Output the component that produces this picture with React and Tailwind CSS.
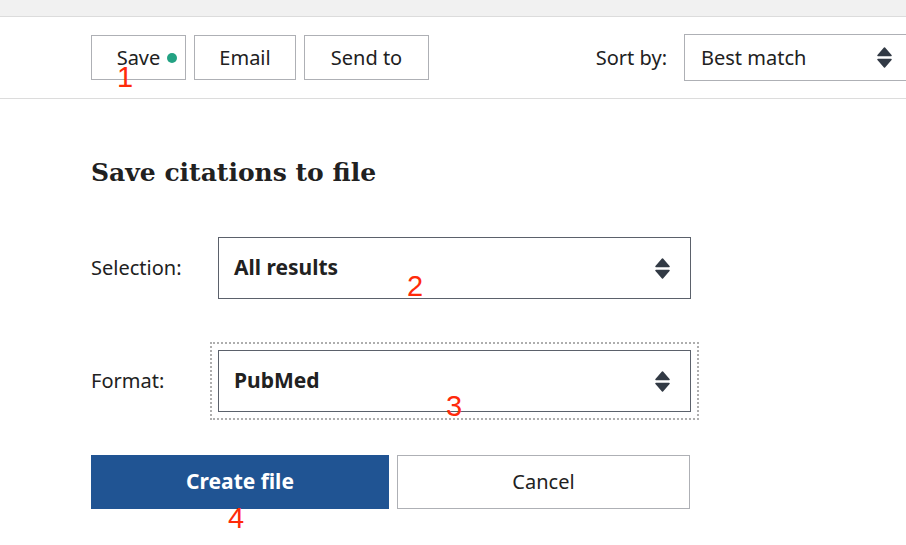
import { useState } from "react";

const sans = { fontFamily: '"Noto Sans", "Open Sans", sans-serif' };

function Arrows() {
  return (
    <svg width="15" height="21" viewBox="0 0 15 21" className="shrink-0">
      <path d="M7.5 1 L14 8.5 H1 Z" fill="#323a45" stroke="#323a45" strokeWidth="1.5" strokeLinejoin="round" />
      <path d="M1 12.5 H14 L7.5 20 Z" fill="#323a45" stroke="#323a45" strokeWidth="1.5" strokeLinejoin="round" />
    </svg>
  );
}

function Field({ label, value, focused }) {
  return (
    <div className="flex items-center">
      <span className="w-[127px] text-[20px] text-[#212121]">{label}</span>
      <div
        className={
          "w-[473px] h-[62px] border border-[#5b616b] bg-white flex items-center justify-between pl-[15px] pr-[20px] " +
          (focused ? "outline-[2px] outline-dotted outline-[#aeaeae] outline-offset-[6px]" : "")
        }
      >
        <span className="text-[21px] font-bold text-[#212121]">{value}</span>
        <Arrows />
      </div>
    </div>
  );
}

function Mark({ n, className }) {
  return (
    <span
      className={"absolute text-[29px] leading-none text-[#ff2a0a] " + className}
      style={{ fontFamily: '"Liberation Sans", Arial, sans-serif' }}
    >
      {n}
    </span>
  );
}

export default function App() {
  const [format] = useState("PubMed");

  return (
    <div className="relative w-[906px] h-[545px] overflow-hidden bg-white" style={sans}>
      <div className="h-[17px] bg-[#f1f1f1] border-b border-[#dcdcdc]" />

      <div className="h-[82px] border-b border-[#dcdcdc] flex items-center pl-[91px]">
        <div className="flex gap-[8px]">
          <button className="relative w-[95px] h-[45px] border border-[#aeb0b5] text-[20px] text-[#212121]">
            Save
            <span className="absolute left-[75px] top-[17px] w-[10px] h-[10px] rounded-full bg-[#23a283]" />
          </button>
          <button className="w-[102px] h-[45px] border border-[#aeb0b5] text-[20px] text-[#212121]">Email</button>
          <button className="w-[125px] h-[45px] border border-[#aeb0b5] text-[20px] text-[#212121]">Send to</button>
        </div>
        <span className="ml-auto mr-[17px] text-[20px] text-[#212121]">Sort by:</span>
        <div className="w-[235px] -mr-[13px] h-[47px] border border-[#aeb0b5] flex items-center justify-between pl-[16px] pr-[26px] shrink-0">
          <span className="text-[20px] text-[#212121]">Best match</span>
          <Arrows />
        </div>
      </div>

      <div className="pl-[91px] pt-[56px]">
        <h2
          className="text-[25px] leading-[36px] font-bold text-[#212121]"
          style={{ fontFamily: '"DejaVu Serif", "Liberation Serif", serif' }}
        >
          Save citations to file
        </h2>

        <div className="mt-[46px] flex flex-col gap-[51px]">
          <Field label="Selection:" value="All results" />
          <Field label="Format:" value={format} focused />
        </div>

        <div className="mt-[43px] flex gap-[8px]">
          <button className="w-[298px] h-[54px] bg-[#205493] text-white text-[21px] font-bold">Create file</button>
          <button className="w-[293px] h-[54px] border border-[#aeb0b5] bg-white text-[20px] text-[#212121]">Cancel</button>
        </div>
      </div>

      <Mark n="1" className="left-[117px] top-[63px]" />
      <Mark n="2" className="left-[407px] top-[272px]" />
      <Mark n="3" className="left-[446px] top-[392px]" />
      <Mark n="4" className="left-[228px] top-[504px]" />
    </div>
  );
}
